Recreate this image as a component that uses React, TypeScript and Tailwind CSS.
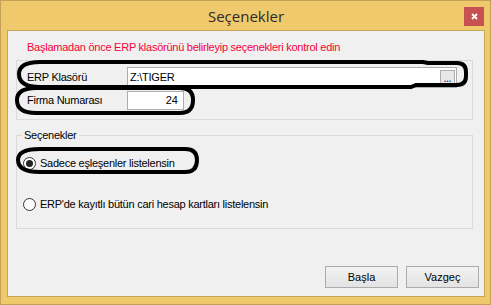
import React from "react";

const font = { fontFamily: '"Liberation Sans", Arial, sans-serif' };

function Radio({ checked, label }: { checked?: boolean; label: string }) {
  return (
    <div className="flex items-center h-[16px]">
      <span className="w-[13px] h-[13px] rounded-full border border-[#333333] bg-white flex items-center justify-center">
        {checked && <span className="w-[7px] h-[7px] rounded-full bg-[#222222]" />}
      </span>
      <span className="ml-[4px] text-[11px] tracking-[-0.25px] text-black leading-none">{label}</span>
    </div>
  );
}

export default function App() {
  return (
    <div
      className="relative w-[491px] h-[305px] border border-[#c2a255] bg-[#f0c96c] flex flex-col pl-[6px] pr-[5px] pb-[7px] overflow-hidden"
      style={font}
    >
      {/* Title bar */}
      <div className="h-[29px] flex items-center justify-center">
        <span
          className="text-[15px] text-[#2b2b2b] pt-[2px]"
          style={{ fontFamily: '"Open Sans", "Noto Sans", sans-serif' }}
        >
          Seçenekler
        </span>
      </div>
      <button className="absolute left-[463px] top-[6px] w-[20px] h-[19px] bg-[#c75050] flex items-center justify-center">
        <svg width="7" height="7" viewBox="0 0 7 7">
          <path d="M1 1 L6 6 M6 1 L1 6" stroke="white" strokeWidth="1.8" />
        </svg>
      </button>

      {/* Client area */}
      <div className="flex-1 border border-[#c6a65c] bg-[#f0f0f0] flex flex-col pl-[8px] pr-[5px]">
        <div className="mt-[10px] ml-[11px] text-[11px] tracking-[-0.25px] text-[#f5003a] leading-[13px]">
          Başlamadan önce ERP klasörünü belirleyip seçenekleri kontrol edin
        </div>

        {/* ERP panel */}
        <div className="mt-[6px] mr-[6px] h-[60px] border border-[#dadada] flex flex-col pl-[10px] pt-[6px]">
          <div className="flex items-center h-[21px]">
            <span className="w-[100px] text-[11px] tracking-[-0.25px] text-black">ERP Klasörü</span>
            <div className="w-[330px] h-[21px] bg-white border border-[#abadb3] flex items-center pl-[2px] pr-[1px]">
              <span className="flex-1 text-[11px] tracking-[-0.25px] text-black">Z:\TIGER</span>
              <span className="w-[15px] h-[15px] border border-[#adadad] bg-[#e8e8e8] flex items-end justify-center text-[9px] leading-[9px] text-[#2a3a8a] font-bold">
                ...
              </span>
            </div>
          </div>
          <div className="flex items-center h-[19px] mt-[3px]">
            <span className="w-[100px] text-[11px] tracking-[-0.25px] text-black">Firma Numarası</span>
            <div className="w-[57px] h-[19px] bg-white border border-[#abadb3] flex items-center justify-end pr-[5px]">
              <span className="text-[11px] text-black">24</span>
            </div>
          </div>
        </div>

        {/* Seçenekler group */}
        <div className="relative mt-[15px] mr-[6px] h-[94px] border border-[#dadada] flex flex-col pl-[6px] pt-[19px]">
          <span className="absolute left-[5px] top-[-8px] px-[2px] bg-[#f0f0f0] text-[11px] tracking-[-0.25px] text-black leading-[14px]">
            Seçenekler
          </span>
          <Radio checked label="Sadece eşleşenler listelensin" />
          <div className="mt-[25px]">
            <Radio label="ERP'de kayıtlı bütün cari hesap kartları listelensin" />
          </div>
        </div>

        {/* Buttons */}
        <div className="mt-auto mb-[8px] flex justify-end gap-[8px]">
          <button className="w-[73px] h-[22px] border border-[#acacac] bg-gradient-to-b from-[#f2f2f2] to-[#e3e3e3] text-[11px] text-black">
            Başla
          </button>
          <button className="w-[73px] h-[22px] border border-[#acacac] bg-gradient-to-b from-[#f2f2f2] to-[#e3e3e3] text-[11px] text-black">
            Vazgeç
          </button>
        </div>
      </div>

      {/* Hand-drawn annotation marks */}
      <svg className="absolute left-[-1px] top-[-1px] pointer-events-none" width="491" height="305" fill="none">
        <path
          d="M40 62 L423 62 L428 63 L457 63 Q466 63 466 72 L466 76 Q466 85 457 85 L416 85 L411 87 L40 87 Q19 87 19 74 Q19 62 40 62 Z"
          stroke="black"
          strokeWidth="4"
        />
        <path
          d="M36 88 L180 88 Q193 88 193 100 Q193 113 180 113 L36 113 Q17 113 17 100 Q17 88 36 88 Z"
          stroke="black"
          strokeWidth="4"
        />
        <path
          d="M40 149 L185 149 Q197 149 197 160 Q197 172 185 172 L40 172 Q18 172 18 160 Q18 149 40 149 Z"
          stroke="black"
          strokeWidth="4"
        />
      </svg>
    </div>
  );
}
